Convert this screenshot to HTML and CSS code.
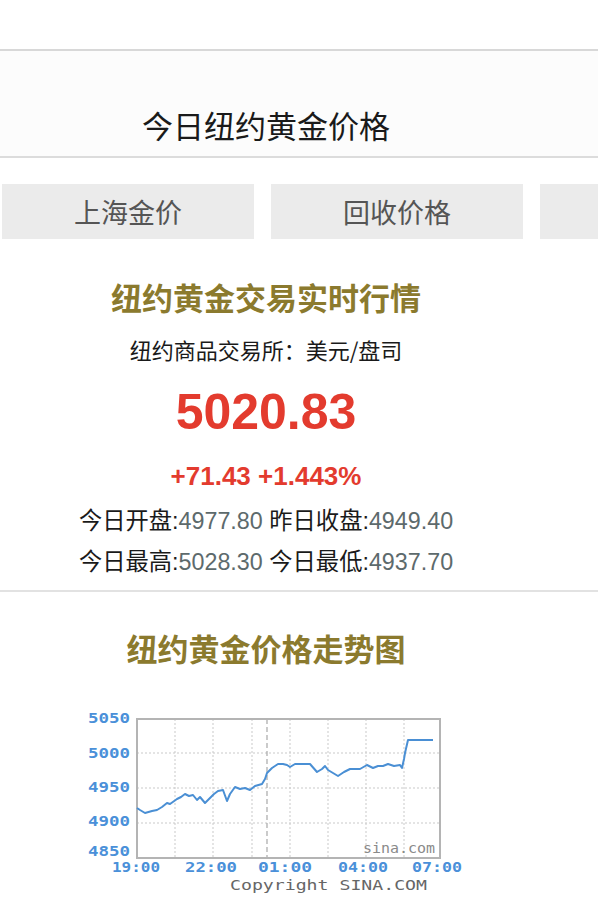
FILE: index.html
```html
<!DOCTYPE html>
<html lang="zh-CN">
<head>
<meta charset="utf-8">
<title>今日纽约黄金价格</title>
<link rel="stylesheet" href="styles.css">
</head>
<body>
<div class="topbar"></div>
<header class="header">
  <h1 class="header-title">今日纽约黄金价格</h1>
</header>
<nav class="tabs">
  <a class="tab">上海金价</a>
  <a class="tab">回收价格</a>
  <a class="tab"></a>
</nav>
<section class="quote">
  <h2 class="gold-title">纽约黄金交易实时行情</h2>
  <p class="subtitle">纽约商品交易所：美元/盘司</p>
  <p class="price">5020.83</p>
  <p class="change">+71.43 +1.443%</p>
  <div class="stats">
    <p class="stat-row">今日开盘:<span class="num">4977.80</span> 昨日收盘:<span class="num">4949.40</span></p>
    <p class="stat-row">今日最高:<span class="num">5028.30</span> 今日最低:<span class="num">4937.70</span></p>
  </div>
</section>
<div class="divider"></div>
<section class="trend">
  <h2 class="gold-title trend-title">纽约黄金价格走势图</h2>
  <svg class="chart" width="400" height="195" viewBox="0 0 400 195">
    <g stroke="#c9c9c9" stroke-width="1" stroke-dasharray="2 2">
      <line x1="57" y1="52" x2="360" y2="52"/>
      <line x1="57" y1="87" x2="360" y2="87"/>
      <line x1="57" y1="122" x2="360" y2="122"/>
      <line x1="95" y1="18" x2="95" y2="157"/>
      <line x1="133" y1="18" x2="133" y2="157"/>
      <line x1="172" y1="18" x2="172" y2="157"/>
      <line x1="210" y1="18" x2="210" y2="157"/>
      <line x1="248" y1="18" x2="248" y2="157"/>
      <line x1="286" y1="18" x2="286" y2="157"/>
      <line x1="324" y1="18" x2="324" y2="157"/>
    </g>
    <line x1="187" y1="18" x2="187" y2="157" stroke="#a8a8a8" stroke-width="1.2" stroke-dasharray="5 3"/>
    <rect x="57" y="18" width="303" height="139" fill="none" stroke="#b4b4b4" stroke-width="2"/>
    <polyline fill="none" stroke="#4a8fd4" stroke-width="2" stroke-linejoin="round" points="57,107 60,109 65,112 72,110 77,109 82,106 87,102 90,103 97,98 101,96 105,93 109,95 113,94 117,99 120,96 125,102 130,97 134,93 138,90 143,89 147,100 150,93 155,86 160,88 165,87 170,89 175,85 182,83 185,78 187,72 192,67 198,63 203,63 207,64 210,66 215,63 230,63 237,71 242,68 245,65 248,69 253,72 258,75 264,71 270,68 280,68 287,64 293,67 298,65 303,65 308,63 314,65 320,64 322,67 324,58 325,52 328,39 353,39"/>
    <text class="sina" x="283" y="152" textLength="72" lengthAdjust="spacingAndGlyphs">sina.com</text>
    <g class="axis">
      <text x="8" y="22" textLength="42" lengthAdjust="spacingAndGlyphs">5050</text>
      <text x="8" y="57" textLength="42" lengthAdjust="spacingAndGlyphs">5000</text>
      <text x="8" y="91" textLength="42" lengthAdjust="spacingAndGlyphs">4950</text>
      <text x="8" y="125" textLength="42" lengthAdjust="spacingAndGlyphs">4900</text>
      <text x="8" y="155" textLength="42" lengthAdjust="spacingAndGlyphs">4850</text>
      <text x="32" y="171" textLength="48" lengthAdjust="spacingAndGlyphs">19:00</text>
      <text x="105" y="171" textLength="52" lengthAdjust="spacingAndGlyphs">22:00</text>
      <text x="178" y="171" textLength="54" lengthAdjust="spacingAndGlyphs">01:00</text>
      <text x="258" y="171" textLength="50" lengthAdjust="spacingAndGlyphs">04:00</text>
      <text x="332" y="171" textLength="50" lengthAdjust="spacingAndGlyphs">07:00</text>
    </g>
    <text class="copy" x="150" y="189" textLength="197" lengthAdjust="spacingAndGlyphs">Copyright  SINA.COM</text>
  </svg>
</section>
</body>
</html>
```
FILE: styles.css
```css
* {
  box-sizing: border-box;
}

html, body {
  margin: 0;
  padding: 0;
  background: #ffffff;
  overflow-x: hidden;
}

body {
  width: 598px;
  font-family: "Liberation Sans", "Noto Sans CJK SC", sans-serif;
  color: #111;
}

.topbar {
  height: 51px;
  border-bottom: 2px solid #d8d8d8;
  box-shadow: 0 1px 3px rgba(0, 0, 0, 0.06);
}

.header {
  background: #fcfcfc;
  height: 107px;
  border-bottom: 2px solid #dcdcdc;
  padding-top: 54px;
}

.header-title {
  margin: 0;
  width: 532px;
  text-align: center;
  font-family: "Noto Sans CJK SC", sans-serif;
  font-size: 31px;
  font-weight: 400;
  line-height: 40px;
  color: #1a1a1a;
}

.tabs {
  display: flex;
  gap: 17px;
  padding: 26px 0 0 2px;
  overflow: hidden;
  white-space: nowrap;
}

.tab {
  flex: 0 0 252px;
  height: 55px;
  background: #ebebeb;
  color: #555;
  font-family: "Noto Sans CJK SC", sans-serif;
  font-size: 27px;
  line-height: 55px;
  text-align: center;
}

.quote {
  width: 532px;
  text-align: center;
  padding-top: 38px;
}

.quote p {
  margin: 0;
}

.gold-title {
  margin: 0;
  font-family: "Noto Sans CJK SC", sans-serif;
  font-size: 31px;
  font-weight: 700;
  line-height: 40px;
  color: #8b7a2e;
}

.subtitle {
  margin-top: 17px !important;
  font-family: "Noto Sans CJK SC", sans-serif;
  font-size: 22px;
  line-height: 30px;
  color: #1a1a1a;
}

.price {
  margin-top: 18px !important;
  font-size: 50px;
  font-weight: 700;
  line-height: 60px;
  color: #e33b2e;
}

.change {
  margin-top: 16px !important;
  font-size: 26px;
  font-weight: 700;
  line-height: 36px;
  color: #e33b2e;
}

.stats {
  margin-top: 7px;
}

.stat-row {
  font-size: 23.3px;
  line-height: 41px;
  color: #1a1a1a;
}

.num {
  color: #5d6a6c;
}

.divider {
  margin-top: 7px;
  height: 2px;
  background: #e2e2e2;
}

.trend {
  width: 532px;
  padding-top: 36px;
}

.trend-title {
  text-align: center;
}

.chart {
  display: block;
  margin: 33px 0 0 80px;
}

.axis text {
  font-family: "DejaVu Sans Mono", monospace;
  font-size: 14px;
  font-weight: 700;
  fill: #4a90d9;
}

.copy {
  font-family: "DejaVu Sans Mono", monospace;
  font-size: 14px;
  fill: #666;
}

.sina {
  font-family: "DejaVu Sans Mono", monospace;
  font-size: 14px;
  fill: #8a8a8a;
}
```
